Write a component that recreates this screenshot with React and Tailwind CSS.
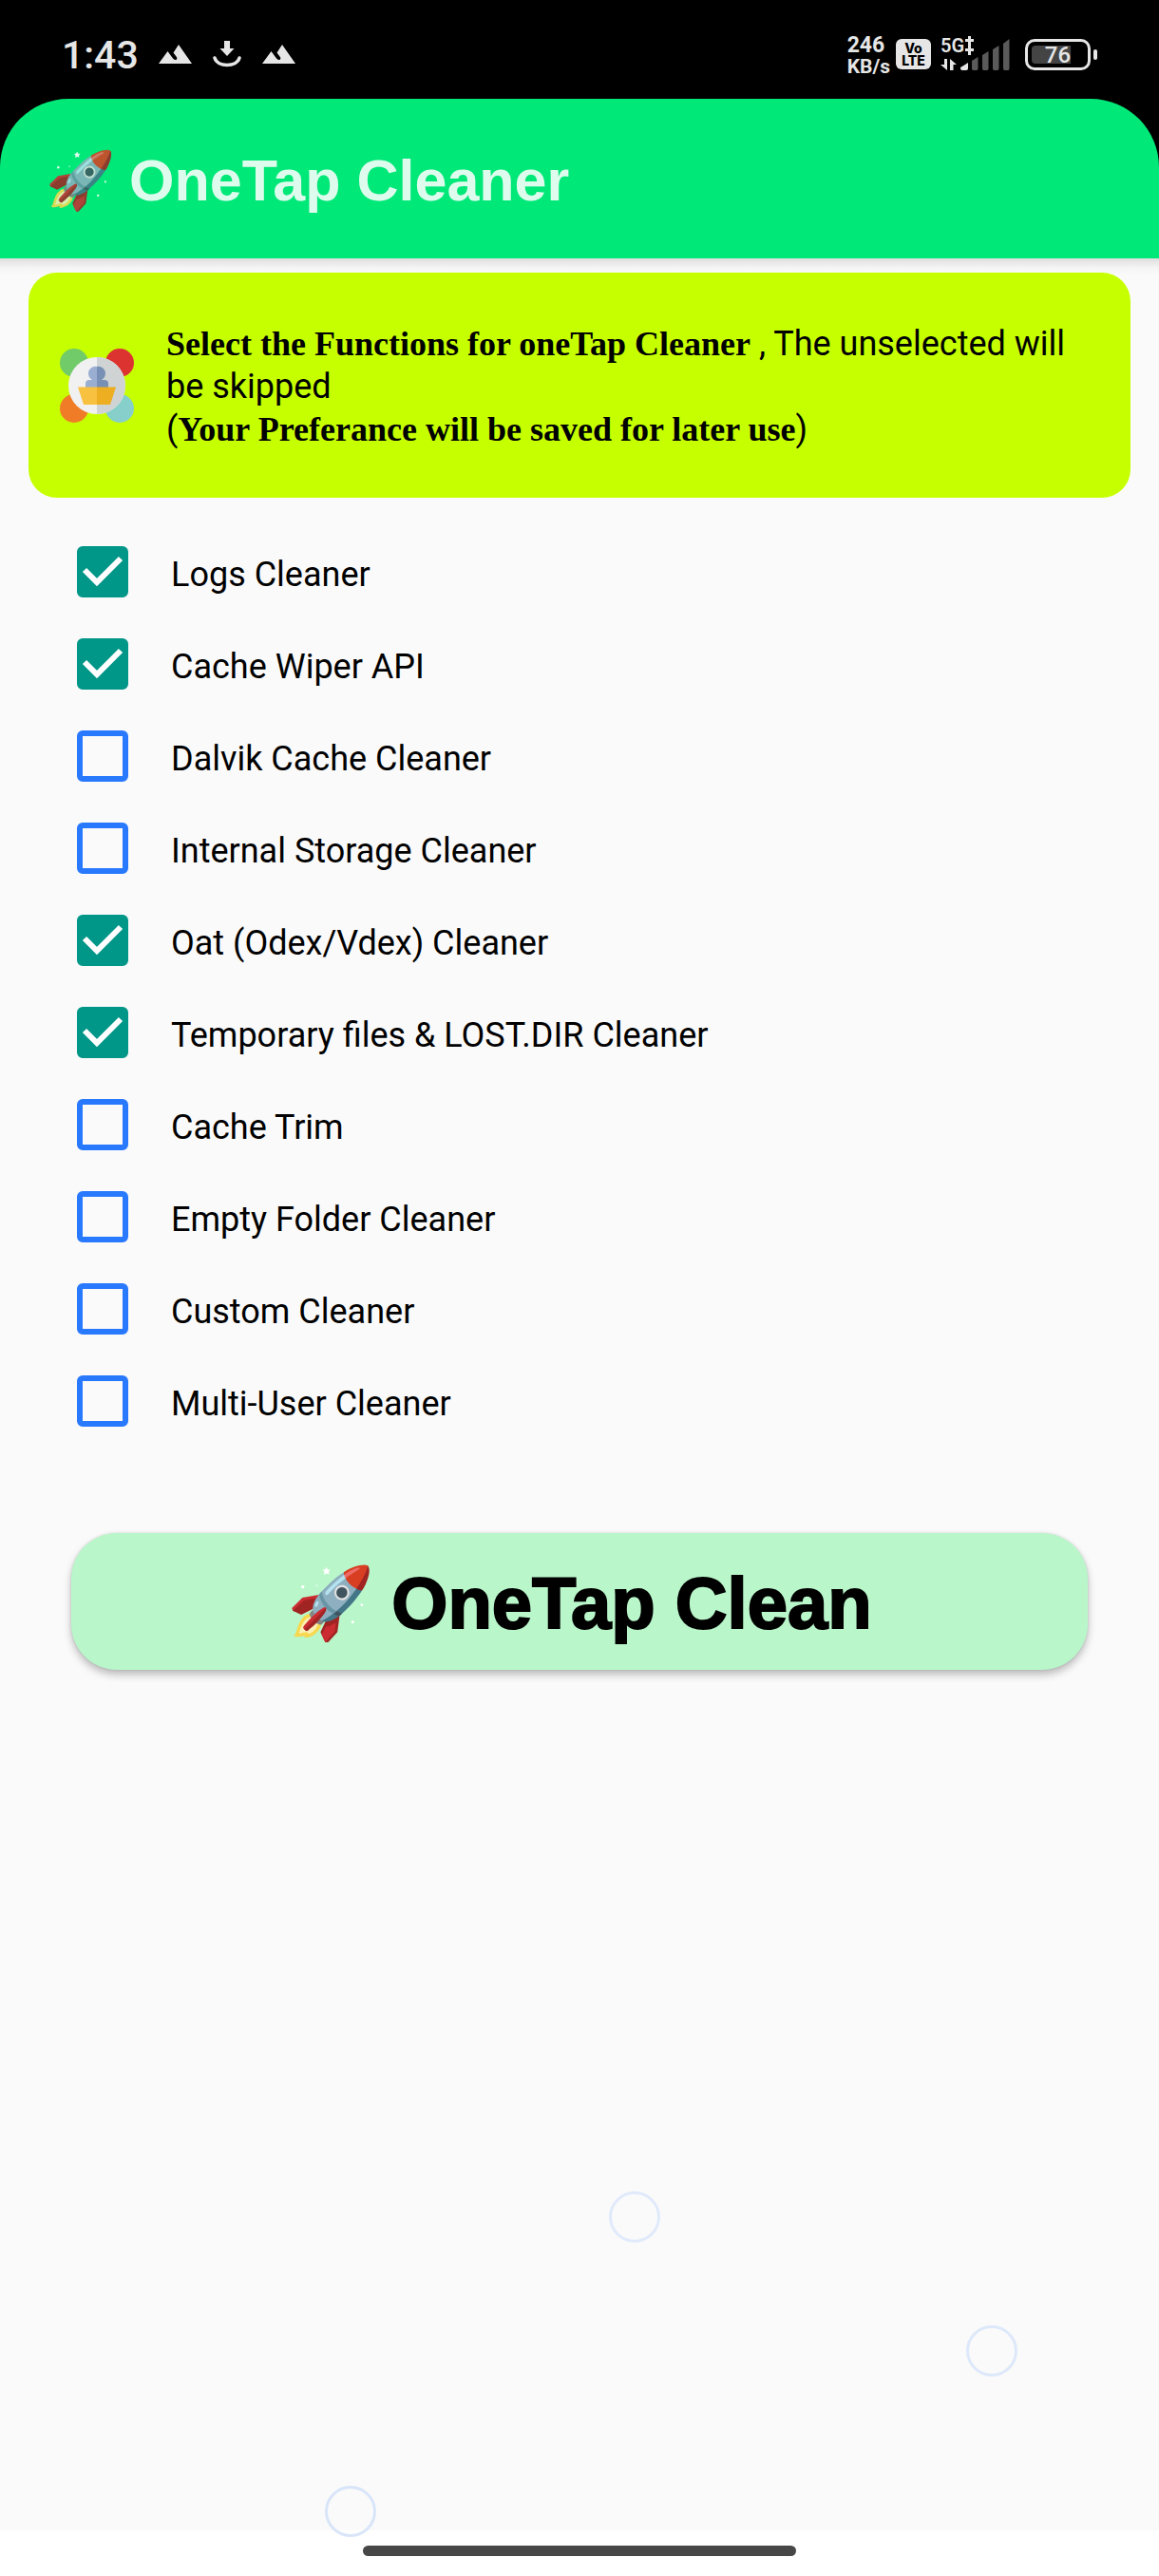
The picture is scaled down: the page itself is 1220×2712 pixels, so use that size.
import { useState } from "react";

const OPTIONS = [
  { id: "logs", label: "Logs Cleaner", on: true },
  { id: "cache-wiper", label: "Cache Wiper API", on: true },
  { id: "dalvik", label: "Dalvik Cache Cleaner", on: false },
  { id: "internal", label: "Internal Storage Cleaner", on: false },
  { id: "oat", label: "Oat (Odex/Vdex) Cleaner", on: true },
  { id: "temp", label: "Temporary files & LOST.DIR Cleaner", on: true },
  { id: "trim", label: "Cache Trim", on: false },
  { id: "empty", label: "Empty Folder Cleaner", on: false },
  { id: "custom", label: "Custom Cleaner", on: false },
  { id: "multi-user", label: "Multi-User Cleaner", on: false },
];

function MountainIcon() {
  return (
    <svg width="35" height="20" viewBox="0 0 35 20" fill="currentColor" aria-hidden="true">
      <path d="M0 20 L9.5 7 L15 14.5 Q17.5 17 19 15.5 Q20 14 18.5 12.5 L15.5 8.5 L21 0 L35 20 Z" />
    </svg>
  );
}

function DownloadIcon() {
  return (
    <svg width="30" height="28" viewBox="0 0 30 28" fill="currentColor" aria-hidden="true">
      <path d="M12 0 H18 V8 H22.5 L15 16 L7.5 8 H12 Z" />
      <path d="M2 18 C5 28 25 28 28 18" fill="none" stroke="currentColor" strokeWidth="3.5" strokeLinecap="round" />
    </svg>
  );
}

function Signal() {
  return (
    <div className="relative">
      <svg width="73" height="38" viewBox="0 0 73 38" fill="currentColor" aria-hidden="true">
        {/* double plus beside the network name */}
        <path d="M29 0 H32 V3 H35 V6 H32 V13 H35 V16 H32 V20 H29 V16 H26 V13 H29 V6 H26 V3 H29 Z" />
        <path d="M4 24 H7 V36 L0 30 H4 Z" />
        <path d="M10 24 L17 30 H13.500 V36 H10 Z" />
        <path d="M21 33 L29 28 V34 Q29 36 27 36 H23 Q21 36 21 34 Z" />
        <g fill="#5a5a5a">
          <path d="M33 26 L39.500 22 V34 Q39.500 36 38 36 H34.500 Q33 36 33 34 Z" />
          <path d="M44 20 L50.500 16 V34 Q50.500 36 49 36 H45.500 Q44 36 44 34 Z" />
          <path d="M55 14 L61.500 10 V34 Q61.500 36 60 36 H56.500 Q55 36 55 34 Z" />
          <path d="M66 8 L72.500 3 V34 Q72.500 36 71 36 H67.500 Q66 36 66 34 Z" />
        </g>
      </svg>
      <span className="absolute top-0 left-0 text-[20px] leading-5 font-semibold">5G</span>
    </div>
  );
}

function StatusBar() {
  return (
    <div className="flex h-[104px] items-center bg-black pt-[10px] pr-[65px] pl-[65px] text-[#e6e6e6]">
      <span className="pt-[2px] text-[41px] leading-[48px] font-medium">1:43</span>
      <div className="ml-[21px] flex items-center gap-[22px]">
        <MountainIcon />
        <DownloadIcon />
        <MountainIcon />
      </div>
      <div className="ml-auto flex items-center">
        <div className="pt-[3px] leading-[22px] font-bold">
          <div className="text-[23px]">246</div>
          <div className="text-[21px]">KB/s</div>
        </div>
        <div className="ml-[6px] flex h-8 w-[37px] flex-col items-center justify-center rounded-md bg-[#e6e6e6] font-['Inter',sans-serif] text-[14px] leading-[13px] font-extrabold text-black">
          <span>Vo</span>
          <span>LTE</span>
        </div>
        <div className="ml-[10px]">
          <Signal />
        </div>
        <div className="ml-4 flex items-center gap-[3px]">
          <div className="relative flex h-[33px] w-[69px] items-center justify-center rounded-[10px] border-3 border-[#e6e6e6]">
            <div className="absolute top-1 left-1 h-[19px] w-[41px] rounded-l-[4px] bg-[#444444]" />
            <span className="relative pt-[2px] text-[24px] leading-6 font-medium">76</span>
          </div>
          <div className="h-[11px] w-1 rounded-[2px] bg-[#e6e6e6]" />
        </div>
      </div>
    </div>
  );
}

function BannerIcon() {
  return (
    <svg className="shrink-0" width="78" height="78" viewBox="0 0 78 78" aria-hidden="true">
      <circle cx="15" cy="15" r="15" fill="#71cb68" />
      <circle cx="63" cy="15" r="15" fill="#dc3230" />
      <circle cx="15" cy="63" r="15" fill="#f07c28" />
      <circle cx="63" cy="63" r="15" fill="#86cfca" />
      <circle cx="39" cy="39" r="30" fill="#f1f1f1" />
      <path d="M39 9 A30 30 0 0 1 39 69 Z" fill="#cfd3d4" />
      <path d="M39 19 A7.500 7.500 0 0 0 34 33 H31 Q27 33 27 37 V42 H39 Z" fill="#9aaed2" />
      <path d="M39 19 A7.500 7.500 0 0 1 44 33 H47 Q51 33 51 37 V42 H39 Z" fill="#7890b5" />
      <path d="M19 40.500 H39 V59 H25 Z" fill="#f8c13f" />
      <path d="M59 40.500 H39 V59 H53 Z" fill="#eeae22" />
    </svg>
  );
}

function Option({ id, label, on }) {
  const [checked, setChecked] = useState(on);
  return (
    <li className="flex h-[97px] items-center gap-[45px]">
      <span className="relative h-[54px] w-[54px]">
        <input
          id={id}
          type="checkbox"
          checked={checked}
          onChange={(e) => setChecked(e.target.checked)}
          className="peer block h-full w-full appearance-none rounded-md border-6 border-[#2979ff] checked:border-[#009688] checked:bg-[#009688]"
        />
        <svg
          className="pointer-events-none invisible absolute inset-0 peer-checked:visible"
          viewBox="0 0 54 54"
          aria-hidden="true"
        >
          <path d="M8 25 L21 38 L46 13" fill="none" stroke="white" strokeWidth="6" />
        </svg>
      </span>
      <label htmlFor={id} className="pt-[6px] text-[36px] leading-[44px]">
        {label}
      </label>
    </li>
  );
}

export default function App() {
  return (
    <div className="flex min-h-screen flex-col bg-white font-['Roboto',sans-serif] text-black">
      <StatusBar />
      <div className="bg-black">
        <header className="flex h-[168px] items-center rounded-t-[72px] bg-[#00e878] pl-[48px]">
          <h1 className="flex items-center gap-[15px] pt-1 font-['Liberation_Sans',sans-serif] text-[61px] leading-[72px] font-bold text-white opacity-87">
            <span className="text-[59px]" aria-hidden="true">🚀</span>
            <span>OneTap Cleaner</span>
          </h1>
        </header>
      </div>
      <main className="flex grow flex-col bg-[#fafafa] bg-linear-to-b from-[#dedede] via-[#f5f5f5] via-[10px] to-[#fafafa] to-[18px] pt-[15px]">
        <section className="mx-[30px] flex min-h-[237px] items-center gap-[34px] rounded-[30px] bg-[#c6ff00] px-[33px]">
          <BannerIcon />
          <p className="pt-1 text-[36px] leading-[45px]">
            <b className="font-['Liberation_Serif',serif]">Select the Functions for oneTap Cleaner</b> , The unselected will be skipped
            <br />(<b className="font-['Liberation_Serif',serif]">Your Preferance will be saved for later use</b>)
          </p>
        </section>
        <ul className="mt-[29px] px-[81px]">
          {OPTIONS.map((o) => (
            <Option key={o.id} {...o} />
          ))}
        </ul>
        <button
          type="button"
          className="mx-[75px] mt-[91px] flex h-[144px] items-center justify-center gap-[18px] rounded-[48px] bg-[#b9f6ca] pt-1 font-['Liberation_Sans',sans-serif] text-[76px] leading-[88px] font-bold shadow-[0_5px_8px_rgba(0,0,0,0.25),0_0_3px_rgba(0,0,0,0.12)]"
        >
          <span className="text-[74px]" aria-hidden="true">🚀</span>
          <span className="[-webkit-text-stroke:2px_black]">OneTap Clean</span>
        </button>
        <div className="relative grow" aria-hidden="true">
          <span className="absolute bottom-[303px] left-[52.5%] h-[54px] w-[54px] rounded-full border-3 border-[#e0eafb]" />
          <span className="absolute bottom-[162px] left-[83.4%] h-[54px] w-[54px] rounded-full border-3 border-[#dde8fa]" />
          <span className="absolute -bottom-[7px] left-[28%] h-[54px] w-[54px] rounded-full border-3 border-[#d8e5f9]" />
        </div>
      </main>
      <div className="flex h-12 justify-center pt-4">
        <div className="h-[11px] w-[456px] rounded-full bg-[#474747]" />
      </div>
    </div>
  );
}
